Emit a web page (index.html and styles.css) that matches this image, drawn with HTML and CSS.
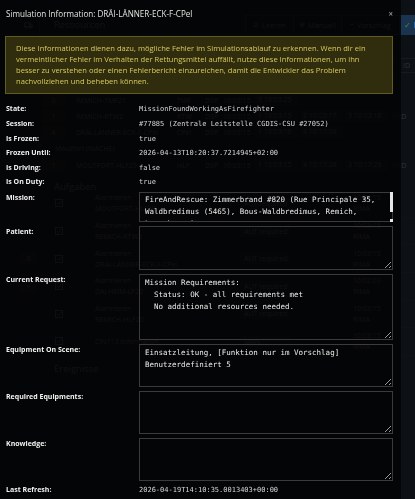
FILE: index.html
```html
<!DOCTYPE html>
<html lang="de">
<head>
<meta charset="utf-8">
<title>Ressourcen</title>
<link rel="stylesheet" href="styles.css">
</head>
<body>
<div class="app">
  <header class="toolbar">
    <div class="tool-icon">
      <svg width="9" height="9" viewBox="0 0 16 16" fill="none" stroke="currentColor" stroke-width="1.6">
        <rect x="1" y="5" width="9" height="7"/>
        <path d="M10 7h3l2 3v2h-5z"/>
        <circle cx="4" cy="13" r="1.5"/>
        <circle cx="12" cy="13" r="1.5"/>
      </svg>
    </div>
    <h2 class="page-title">Ressourcen</h2>
    <div class="btn-group">
      <span class="btn"><span class="ico">⊘</span>Leeren</span>
      <span class="btn"><span class="ico">⊕</span>Manuell</span>
      <span class="btn"><span class="ico">+</span>Vorschlag</span>
    </div>
    <span class="btn-primary"><span class="ok">✓</span>D</span>
  </header>

  <section class="res-table">
    <div class="thead"><span class="end">ID</span></div>
    <div class="trow"><span class="num">3</span><span class="name">REMICH-TMF21</span><span class="type">TMF</span><span class="st">DSP</span><span class="time">10:03:15</span><span class="chip">3 10:03:25</span></div>
    <div class="trow"><span class="num">1</span><span class="name">REMICH-RTW2</span><span class="type">RTW</span><span class="st">DSP</span><span class="time">10:03:15</span><span class="chip">1 10:03:15</span><span class="chip">2 10:03:17</span><span class="chip">3 10:03:18</span><span class="end">END</span></div>
    <div class="trow"><span class="num">4</span><span class="name">DRÄI-LÄNNER-ECK-F-CPel</span><span class="type">CPel</span><span class="st">DSP</span><span class="time">10:03:15</span><span class="chip">1 10:03:16</span><span class="chip">4 10:17:38</span></div>
    <div class="tgroup">Moutfort (WACHE)</div>
    <div class="trow"><span class="num">1</span><span class="name">MOUTFORT-HLF20</span><span class="type">HLF</span><span class="st">DSP</span><span class="time">10:03:15</span><span class="chip">1 10:03:15</span><span class="chip">4 10:17:28</span><span class="chip">3 10:17:29</span><span class="end">END</span></div>
  </section>

  <h3 class="section-title">Aufgaben</h3>
  <section class="tasks">
    <div class="task"><span class="side"></span><svg class="check" viewBox="0 0 10 10"><rect x="0.5" y="0.5" width="9" height="9"/><path d="M2.5 5l2 2 4-5"/></svg><div class="task-text"><span>Alarmieren</span><span>MOUTFORT-HLF20</span></div><span class="badge">AUT required</span><div class="task-meta"><span>10:03:15</span><span>RIMA</span></div></div>
    <div class="task"><span class="side"></span><svg class="check" viewBox="0 0 10 10"><rect x="0.5" y="0.5" width="9" height="9"/><path d="M2.5 5l2 2 4-5"/></svg><div class="task-text"><span>Alarmieren</span><span>REMICH-RTW2</span></div><span class="badge">AUT required</span><div class="task-meta"><span>10:03:15</span><span>RIMA</span></div></div>
    <div class="task"><span class="side on">0</span><svg class="check" viewBox="0 0 10 10"><rect x="0.5" y="0.5" width="9" height="9"/><path d="M2.5 5l2 2 4-5"/></svg><div class="task-text"><span>Alarmieren</span><span>DRÄI-LÄNNER-ECK-F-CPel</span></div><span class="badge">AUT required</span><div class="task-meta"><span>10:03:15</span><span>RIMA</span></div></div>
    <div class="task"><span class="side on">+</span><svg class="check" viewBox="0 0 10 10"><rect x="0.5" y="0.5" width="9" height="9"/><path d="M2.5 5l2 2 4-5"/></svg><div class="task-text"><span>Alarmieren</span><span>DALHEIM-LF20</span></div><span class="badge">AUT required</span><div class="task-meta"><span>10:02:03</span><span>RIMA</span></div></div>
    <div class="task"><span class="side"></span><svg class="check" viewBox="0 0 10 10"><rect x="0.5" y="0.5" width="9" height="9"/><path d="M2.5 5l2 2 4-5"/></svg><div class="task-text"><span>Alarmieren</span><span>REMICH-HLF20</span></div><span class="badge">AUT required</span><div class="task-meta"><span>10:03:15</span><span>RIMA</span></div></div>
    <div class="task"><span class="side"></span><svg class="check" viewBox="0 0 10 10"><rect x="0.5" y="0.5" width="9" height="9"/><path d="M2.5 5l2 2 4-5"/></svg><div class="task-text"><span>CIN113 Information</span></div><span class="badge">MAN required</span><div class="task-meta"><span>10:03:15</span><span>RIMA</span></div></div>
  </section>
  <h3 class="section-title events">Ereignisse</h3>
</div>

<div class="modal" role="dialog" aria-labelledby="sim-title">
  <div class="modal-header">
    <h5 class="modal-title" id="sim-title">Simulation Information: DRÄI-LÄNNER-ECK-F-CPel</h5>
    <button class="close" type="button" aria-label="Close">×</button>
  </div>
  <div class="modal-body">
    <div class="alert">Diese Informationen dienen dazu, mögliche Fehler im Simulationsablauf zu erkennen. Wenn dir ein vermeintlicher Fehler im Verhalten der Rettungsmittel auffällt, nutze diese Informationen, um ihn besser zu verstehen oder einen Fehlerbericht einzureichen, damit die Entwickler das Problem nachvollziehen und beheben können.</div>
    <dl class="info">
      <dt>State:</dt><dd>MissionFoundWorkingAsFirefighter</dd>
      <dt>Session:</dt><dd>#77885 (Zentrale Leitstelle CGDIS-CSU #27052)</dd>
      <dt>Is Frozen:</dt><dd>true</dd>
      <dt>Frozen Until:</dt><dd>2026-04-13T10:20:37.7214945+02:00</dd>
      <dt>Is Driving:</dt><dd>false</dd>
      <dt>Is On Duty:</dt><dd>true</dd>
      <dt class="top">Mission:</dt><dd><div class="scroll-wrap"><textarea class="field field-scroll" readonly>FireAndRescue: Zimmerbrand #820 (Rue Principale 35, Waldbredimus (5465), Bous-Waldbredimus, Remich, Luxembourg)</textarea></div></dd>
      <dt class="top">Patient:</dt><dd><textarea class="field field-patient" readonly></textarea></dd>
      <dt class="top">Current Request:</dt><dd><textarea class="field field-tall" readonly>Mission Requirements:
  Status: OK - all requirements met
  No additional resources needed.</textarea></dd>
      <dt class="top">Equipment On Scene:</dt><dd><textarea class="field" readonly>Einsatzleitung, [Funktion nur im Vorschlag] Benutzerdefiniert 5</textarea></dd>
      <dt class="top">Required Equipments:</dt><dd><textarea class="field field-req" readonly></textarea></dd>
      <dt class="top">Knowledge:</dt><dd><textarea class="field" readonly></textarea></dd>
      <dt>Last Refresh:</dt><dd>2026-04-19T14:10:35.0013403+00:00</dd>
    </dl>
  </div>
</div>
</body>
</html>
```

FILE: styles.css
```css
* { box-sizing: border-box; }

html, body {
  margin: 0;
  height: 100%;
}

body {
  background: #0d1115;
  font-family: "Open Sans", "Noto Sans", sans-serif;
  overflow: hidden;
}

/* ---------- page behind the dialog ---------- */
.app {
  width: 415px;
  height: 499px;
  overflow: hidden;
  padding-top: 15px;
  color: #5d636a;
  font-size: 7px;
}

.toolbar {
  display: flex;
  align-items: center;
  height: 20px;
  border-bottom: 1px solid #1f252b;
}
.toolbar > * { flex-shrink: 0; }

.tool-icon {
  width: 40px;
  height: 20px;
  padding-left: 18px;
  display: flex;
  align-items: center;
  justify-content: center;
  border-right: 1px solid #1f252b;
  color: #5d636a;
}

.page-title {
  margin: 0 0 0 14px;
  width: 191px;
  font-size: 9.5px;
  font-weight: 400;
  color: #5d636a;
}

.btn-group {
  display: flex;
  height: 20px;
  border: 1px solid #1f252b;
}
.btn {
  display: flex;
  align-items: center;
  justify-content: center;
  gap: 3px;
  width: 48px;
  font-size: 7.5px;
  border-right: 1px solid #1f252b;
}
.btn:last-child { width: 57px; border-right: 0; }
.ico { font-size: 7px; }

.btn-primary {
  display: flex;
  align-items: center;
  gap: 3px;
  height: 20px;
  width: 17px;
  padding-left: 4px;
  background: #1a3450;
  color: #b9c4cf;
  font-size: 8px;
  font-weight: 700;
}
.ok { color: #3d8b45; font-weight: 400; }

.res-table { margin-top: 23px; }

.thead {
  display: flex;
  align-items: center;
  height: 15px;
  border-top: 1px solid #161b20;
  border-bottom: 1px solid #161b20;
  margin-bottom: 19px;
}
.thead .end { margin-left: auto; margin-right: 5px; }

.trow {
  display: flex;
  align-items: center;
  height: 16px;
  padding-left: 42px;
  white-space: nowrap;
}
.num {
  width: 23px;
  height: 13px;
  line-height: 13px;
  text-align: center;
  background: #161b22;
}
.name { width: 101px; margin-left: 11px; overflow: hidden; }
.type { width: 28px; }
.st { width: 18px; }
.time { width: 32px; }
.chip {
  width: 43px;
  height: 12px;
  line-height: 12px;
  margin-right: 2px;
  padding-left: 3px;
  background: #13181d;
}
.end { margin-left: 2px; color: #2e343a; }

.tgroup {
  height: 17px;
  line-height: 17px;
  padding-left: 55px;
}

.section-title {
  height: 17.2px;
  margin: 0;
  padding: 9px 0 0 54px;
  font-size: 9.5px;
  line-height: 10px;
  font-weight: 400;
}

.tasks { display: flex; flex-direction: column; }

.task {
  display: flex;
  align-items: center;
  height: 27.6px;
  padding-left: 20px;
  border-bottom: 1px solid #0f1317;
}
.side {
  width: 17px;
  height: 13px;
  margin-right: 18px;
  text-align: center;
  line-height: 13px;
}
.side.on { background: #161b22; }
.check {
  width: 8px;
  height: 8px;
  fill: none;
  stroke: #5d636a;
  stroke-width: 1;
}
.task-text {
  display: flex;
  flex-direction: column;
  width: 145px;
  margin-left: 32px;
  line-height: 11px;
}
.badge {
  width: 50px;
  height: 11px;
  line-height: 11px;
  padding-left: 4px;
  background: #13181d;
}
.task-meta {
  display: flex;
  flex-direction: column;
  margin-left: 63px;
  line-height: 11px;
}

.section-title.events { padding-top: 8px; height: auto; }

/* ---------- simulation dialog ---------- */
.modal {
  position: fixed;
  top: 0;
  left: 0;
  width: 401px;
  height: 100%;
  background: rgba(3, 3, 3, 0.86);
  color: #e8e8e8;
  font-family: "Open Sans", "Noto Sans", sans-serif;
}

.modal-header {
  display: flex;
  align-items: center;
  padding: 8px 8px 8px 6px;
}
.modal-title {
  margin: 0;
  font-size: 8.1px;
  font-weight: 400;
  line-height: 11px;
  color: #e4e4e4;
}
.close {
  margin-left: auto;
  padding: 0;
  border: 0;
  background: none;
  color: #8a8a8a;
  font: 700 8px/11px "Open Sans", sans-serif;
}

.modal-body { padding: 9px 8px 0 5px; }

.alert {
  margin: 0 0 8.4px;
  padding: 6px 21px 6px 10px;
  background: #302d0e;
  border: 1px solid #625c22;
  color: #d8ca5c;
  font-size: 7.6px;
  line-height: 11px;
}

.info {
  display: grid;
  grid-template-columns: 133px 1fr;
  margin: 0 0 0 1px;
}
.info dt {
  font-size: 7px;
  font-weight: 700;
  line-height: 14.6px;
  color: #f2f2f2;
}
.info dt.top { padding-top: 1px; }
.info dd {
  margin: 0;
  font-family: "DejaVu Sans Mono", monospace;
  font-size: 7px;
  line-height: 14.6px;
  color: #d6d6d6;
}

.field {
  display: block;
  width: 100%;
  height: 43px;
  margin: 2px 0;
  padding: 2px 5px;
  border: 1px solid #3b3b3b;
  border-radius: 0;
  background: transparent;
  color: #ececec;
  font-family: "DejaVu Sans Mono", monospace;
  font-size: 7.5px;
  line-height: 12px;
  resize: vertical;
  outline: none;
  color-scheme: dark;
}
.field-patient { height: 44px; }
.field-tall { height: 66px; }
.field-req { height: 43.5px; }

/* mission box: slim white scroll thumb with a square grip below it */
.scroll-wrap { position: relative; }
.field-scroll {
  height: 30px;
  padding: 1px 8px 2px 5px;
  resize: none;
  overflow-y: scroll;
  scrollbar-width: none;
}
.field-scroll::-webkit-scrollbar { display: none; }
.scroll-wrap::before,
.scroll-wrap::after {
  content: "";
  position: absolute;
  right: 0;
  width: 3px;
  background: #e6e6e6;
}
.scroll-wrap::before { top: 0; height: 20px; }
.scroll-wrap::after { bottom: 0; height: 3px; }
```
